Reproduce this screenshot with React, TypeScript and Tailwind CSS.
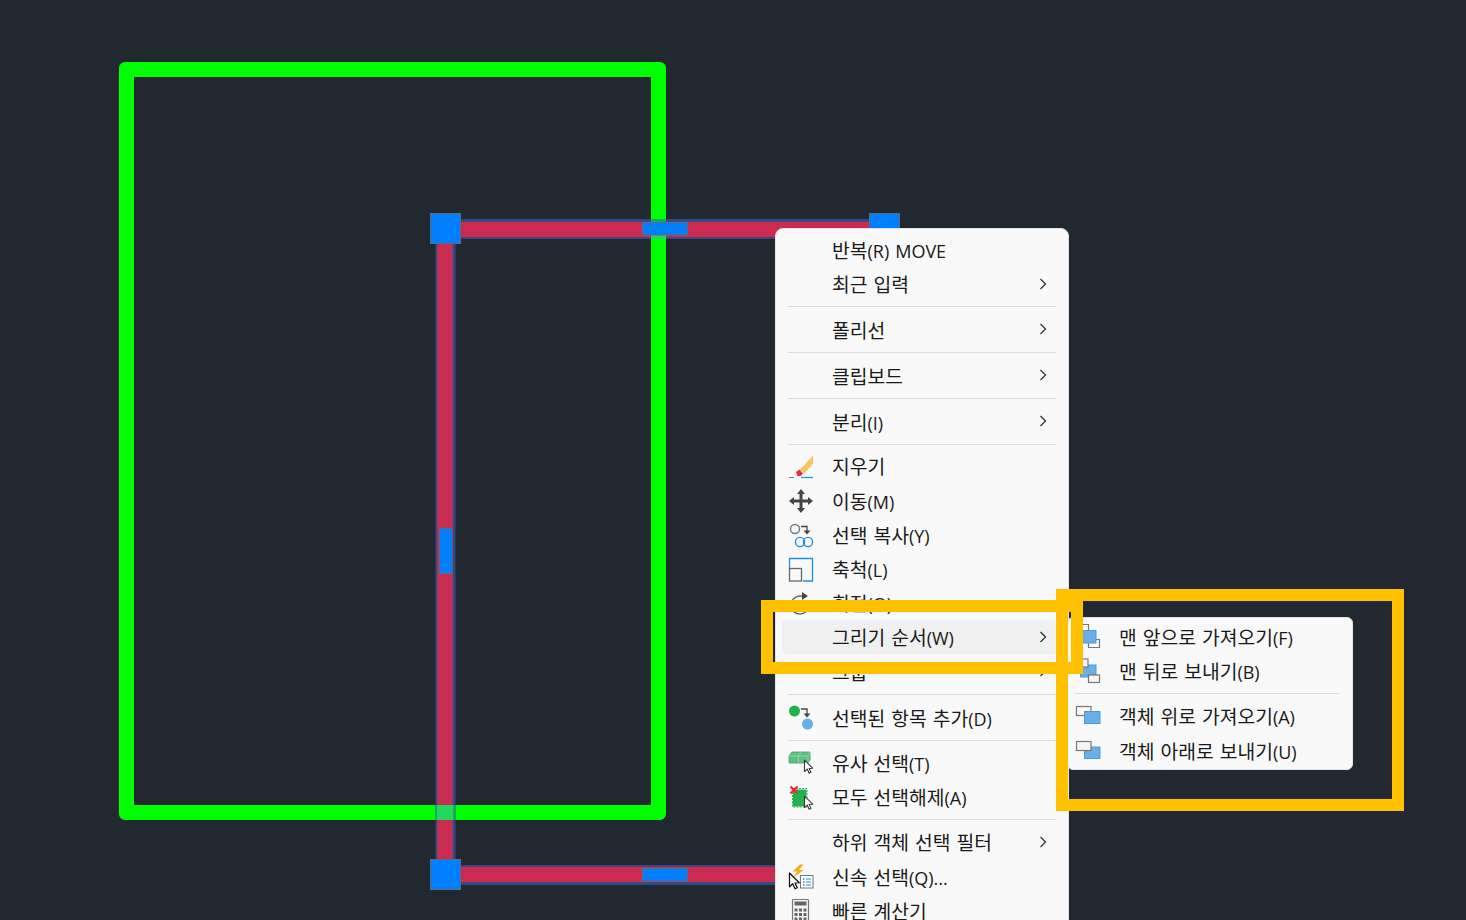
import React from "react";

const S = ({ children }: { children: React.ReactNode }) => (
  <svg width="26" height="26" viewBox="0 0 26 26" className="overflow-visible shrink-0">{children}</svg>
);

const Cursor = ({ x, y, s = 1, dark = false }: { x: number; y: number; s?: number; dark?: boolean }) => (
  <path
    transform={`translate(${x} ${y}) scale(${s})`}
    d="M0 0 L0 11 L2.6 8.6 L4.4 12.6 L6.2 11.8 L4.4 8 L7.8 7.8 Z"
    fill="#fff"
    stroke={dark ? "#111" : "#333"}
    strokeWidth="1"
    strokeLinejoin="round"
  />
);

const Eraser = () => (
  <S>
    <path d="M1 24.5H6" stroke="#777" strokeWidth="1" />
    <path d="M13 24.5H25" stroke="#1e8fe8" strokeWidth="1.2" />
    <path d="M12 16.5 L25 2.5 V10.5 L16.5 20.5 Z" fill="#f8c45f" />
    <path d="M8 19 L11.5 16.5 L15 20.5 L12.5 23 H9.5 Z" fill="#ee2b36" />
  </S>
);
const Move = () => (
  <S>
    <path
      d="M13 1 L17 6 H14.5 V11.5 H20 V9 L25 13 L20 17 V14.5 H14.5 V20 H17 L13 25 L9 20 H11.5 V14.5 H6 V17 L1 13 L6 9 V11.5 H11.5 V6 H9 Z"
      fill="#444"
    />
  </S>
);
const Copy = () => (
  <S>
    <circle cx="7" cy="7" r="4.5" fill="none" stroke="#777" strokeWidth="1.4" />
    <path d="M13 4.5H19V9" fill="none" stroke="#444" strokeWidth="1.3" />
    <path d="M15.5 8.5H22.5L19 12.5Z" fill="#444" />
    <circle cx="12" cy="20" r="4.6" fill="none" stroke="#1e8fe8" strokeWidth="1.4" />
    <circle cx="20" cy="20" r="4.6" fill="none" stroke="#1e8fe8" strokeWidth="1.4" />
  </S>
);
const Scale = () => (
  <S>
    <path d="M1.5 12V2.5H24.5V25H15" fill="none" stroke="#1e8fe8" strokeWidth="1.3" />
    <rect x="1.5" y="12.5" width="12" height="12.5" fill="none" stroke="#666" strokeWidth="1.3" />
  </S>
);
const Rotate = () => (
  <S>
    <path d="M16 7 A9 9 0 1 0 21 15" fill="none" stroke="#666" strokeWidth="1.3" />
    <path d="M14 2 L20 6 L14 10 Z" fill="#444" />
  </S>
);
const AddSel = () => (
  <S>
    <circle cx="6.5" cy="6" r="5.5" fill="#22b14c" />
    <path d="M13 4H19V9" fill="none" stroke="#444" strokeWidth="1.3" />
    <path d="M15.5 8.5H22.5L19 12.5Z" fill="#444" />
    <circle cx="19.5" cy="19" r="5.5" fill="#6aaee6" />
  </S>
);
const Similar = () => (
  <S>
    <path d="M1 6 L4 2 H22 V10 L20 13 H1 Z" fill="#5fbf80" stroke="#3f9e60" strokeWidth="0.8" />
    <path d="M1 6 H20 V13 M10.5 6 V13 M10.5 6 L13 2 M20 6 L22 2" fill="none" stroke="#8ed9a6" strokeWidth="0.9" />
    <Cursor x={16.5} y={10} s={1.05} />
  </S>
);
const Deselect = () => (
  <S>
    <rect x="5" y="5.5" width="13.5" height="17" fill="#22b14c" />
    <rect x="4.5" y="4.5" width="14.5" height="18.5" fill="none" stroke="#22b14c" strokeWidth="1" strokeDasharray="2 1.2" />
    <path d="M2.5 2.5 L9.5 9.5 M9.5 2.5 L2.5 9.5" stroke="#ee2b36" strokeWidth="2.4" />
    <Cursor x={16.5} y={12} s={1.05} />
  </S>
);
const Quick = () => (
  <S>
    <rect x="12.5" y="11.5" width="12.5" height="12.5" fill="#fff" stroke="#777" strokeWidth="1" />
    <path d="M15 15H16.5M15 18H16.5M15 21H16.5" stroke="#1e8fe8" strokeWidth="1.6" />
    <path d="M18 15H23M18 18H23M18 21H23" stroke="#1e8fe8" strokeWidth="1.2" />
    <path d="M12 0.5 L4.5 7.5 H9 L5.5 13.5 L15.5 6 H11 L15.5 0.5 Z" fill="#fbaa1c" />
    <Cursor x={1.5} y={9} s={1.25} dark />
  </S>
);
const Calc = () => (
  <S>
    <rect x="4.5" y="1.5" width="16" height="24" rx="1" fill="#f6f6f6" stroke="#777" strokeWidth="1.2" />
    <rect x="6.5" y="3.5" width="12" height="4" fill="#666" />
    <path d="M6.5 10.5H9.5V13.5H6.5ZM11 10.5H14V13.5H11ZM15.5 10.5H18.5V13.5H15.5ZM6.5 15H9.5V18H6.5ZM11 15H14V18H11ZM15.5 15H18.5V18H15.5ZM6.5 19.5H9.5V22.5H6.5ZM11 19.5H14V22.5H11ZM15.5 19.5H18.5V22.5H15.5Z" fill="#666" />
  </S>
);

const gray = "#777";
const blue = "#6aaee6";
const blueS = "#4d9bdc";
const Front = () => (
  <S>
    <path d="M1.5 12 V0.5 H13.5 V6" fill="none" stroke={gray} strokeWidth="1.2" />
    <path d="M13.5 15.5 H24.5 V23.5 H13.5 V19" fill="none" stroke={gray} strokeWidth="1.2" />
    <rect x="5.5" y="6.5" width="15.5" height="12.5" fill={blue} stroke={blueS} strokeWidth="1" />
  </S>
);
const Back = () => (
  <S>
    <rect x="5.5" y="7" width="15.5" height="12" fill={blue} stroke={blueS} strokeWidth="1" />
    <rect x="1.5" y="1" width="11.5" height="8" fill="#f4f4f4" stroke={gray} strokeWidth="1.2" />
    <rect x="13.5" y="17" width="11" height="7.5" fill="#f4f4f4" stroke={gray} strokeWidth="1.2" />
  </S>
);
const Up = () => (
  <S>
    <rect x="1.5" y="3.5" width="14.5" height="9" fill="none" stroke={gray} strokeWidth="1.2" />
    <rect x="9.5" y="8.5" width="15.5" height="12" fill={blue} stroke={blueS} strokeWidth="1" />
  </S>
);
const Down = () => (
  <S>
    <path d="M16 9H25V20.5H9.5V13" fill={blue} stroke={blueS} strokeWidth="1" />
    <rect x="1.5" y="3.5" width="14.5" height="9" fill="#f4f4f4" stroke={gray} strokeWidth="1.2" />
  </S>
);

const Chevron = () => (
  <svg width="8" height="12" viewBox="0 0 8 12" className="absolute left-[257px] top-[10.5px]">
    <path d="M1.5 1 L6.5 6 L1.5 11" fill="none" stroke="#333" strokeWidth="1.3" />
  </svg>
);

const Label = ({ text }: { text: string }) => (
  <span className="whitespace-nowrap pt-[2px] [word-spacing:1.3px]">
    {text.split(/([\x00-\x7f]+)/).map((part, i) =>
      i % 2 === 1 ? (
        <span key={i}>{part}</span>
      ) : (
        <span key={i} className="text-[19.3px]">{part}</span>
      ),
    )}
  </span>
);

const Row = ({ icon, label, arrow, hover }: { icon?: React.ReactNode; label: string; arrow?: boolean; hover?: boolean }) => (
  <div className={`relative flex h-[34.2px] items-center rounded-[4px] pl-[6px] ${hover ? "bg-[#f0f0f0]" : ""}`}>
    <div className="mr-[18px] h-[26px] w-[26px] shrink-0">{icon}</div>
    <Label text={label} />
    {arrow && <Chevron />}
  </div>
);

const Sep = ({ className }: { className: string }) => <div className={`mx-[6px] h-px bg-[#d9d9d9] ${className}`} />;

const menuFont =
  "font-['Open_Sans','Noto_Sans_CJK_KR',sans-serif] text-[18px] leading-[26px] text-[#1a1a1a]";

export default function App() {
  return (
    <div className="relative h-[920px] w-[1466px] overflow-hidden bg-[#212830]">
      <svg width="1466" height="920" viewBox="0 0 1466 920" className="absolute left-0 top-0">
        <path
          fillRule="evenodd"
          fill="#00ff00"
          d="M125 62H660a6 6 0 0 1 6 6V814a6 6 0 0 1 -6 6H125a6 6 0 0 1 -6 -6V68a6 6 0 0 1 6 -6ZM134 77V805H651V77Z"
        />
        <path d="M445.5 229H890M445.5 229V875M445.5 875H800" fill="none" stroke="#2b4c86" strokeWidth="20" />
        <path d="M445 229.5H890M445 229.5V874.5M445 874.5H800" fill="none" stroke="#c92c50" strokeWidth="15.5" />
        <rect x="437" y="805" width="16" height="15" fill="#22d85c" />
        <rect x="435.5" y="805" width="1.5" height="15" fill="#15a860" />
        <rect x="453" y="805" width="2" height="15" fill="#15a860" />
        <rect x="651" y="219" width="15" height="3" fill="#15a860" />
        <rect x="651" y="235" width="15" height="4" fill="#22d85c" />
        <rect x="430.5" y="213.5" width="30" height="30" fill="#0080ff" stroke="#5b6b80" />
        <rect x="869.5" y="213.5" width="30" height="30" fill="#0080ff" stroke="#5b6b80" />
        <rect x="430.5" y="859.5" width="30" height="30" fill="#0080ff" stroke="#5b6b80" />
        <rect x="642.5" y="222.5" width="45" height="12.5" fill="#0080ff" stroke="#5b6b80" />
        <rect x="642.5" y="868.5" width="45" height="12.5" fill="#0080ff" stroke="#5b6b80" />
        <rect x="439.5" y="528.5" width="12.5" height="45" fill="#0080ff" stroke="#5b6b80" />
      </svg>

      <div className={`absolute left-[775px] top-[228px] w-[294px] rounded-[8px] border border-[#e3e3e3] bg-[#f9f9f9] px-[6px] pt-[4px] ${menuFont}`}>
        <Row label="반복(R) MOVE" />
        <Row label="최근 입력" arrow />
        <Sep className="mb-[5.6px] mt-[5px]" />
        <Row label="폴리선" arrow />
        <Sep className="mb-[5.6px] mt-[5px]" />
        <Row label="클립보드" arrow />
        <Sep className="mb-[5.6px] mt-[5px]" />
        <Row label="분리(I)" arrow />
        <Sep className="mb-[4.6px] mt-[5px]" />
        <Row icon={<Eraser />} label="지우기" />
        <Row icon={<Move />} label="이동(M)" />
        <Row icon={<Copy />} label="선택 복사(Y)" />
        <Row icon={<Scale />} label="축척(L)" />
        <Row icon={<Rotate />} label="회전(O)" />
        <Row label="그리기 순서(W)" arrow hover />
        <Row label="그룹" arrow />
        <Sep className="mb-[5px] mt-[5.8px]" />
        <Row icon={<AddSel />} label="선택된 항목 추가(D)" />
        <Sep className="mb-[5.4px] mt-[5.2px]" />
        <Row icon={<Similar />} label="유사 선택(T)" />
        <Row icon={<Deselect />} label="모두 선택해제(A)" />
        <Sep className="mb-[5.4px] mt-[4.4px]" />
        <Row label="하위 객체 선택 필터" arrow />
        <Row icon={<Quick />} label="신속 선택(Q)..." />
        <Row icon={<Calc />} label="빠른 계산기" />
      </div>

      <div className={`absolute left-[1067px] top-[617px] w-[286px] rounded-[6px] border border-[#e3e3e3] bg-[#f9f9f9] pb-[1px] pl-[1px] pr-[7px] pt-[2px] ${menuFont}`}>
        <Row icon={<Front />} label="맨 앞으로 가져오기(F)" />
        <Row icon={<Back />} label="맨 뒤로 보내기(B)" />
        <Sep className="my-[5px]" />
        <Row icon={<Up />} label="객체 위로 가져오기(A)" />
        <Row icon={<Down />} label="객체 아래로 보내기(U)" />
      </div>

      <div className="absolute left-[761px] top-[600px] h-[74px] w-[322px] border-[12px] border-[#ffc000]" />
      <div className="absolute left-[1056px] top-[589px] h-[222px] w-[348px] border-[12px] border-[#ffc000]" />
    </div>
  );
}
